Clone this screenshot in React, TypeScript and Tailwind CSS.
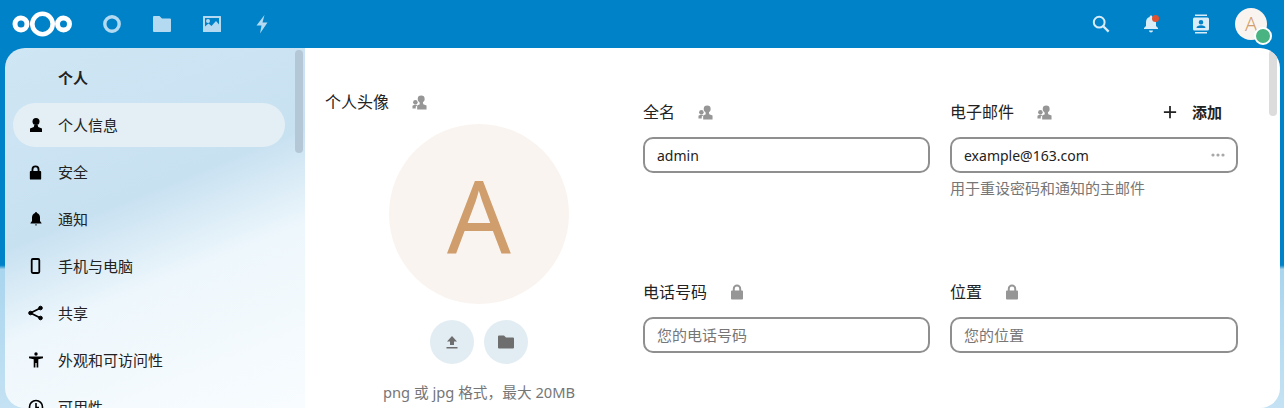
import React from "react";

const FONT = "font-['Noto_Sans','Noto_Sans_CJK_SC',sans-serif]";

function Contacts({ className = "" }: { className?: string }) {
  return (
    <svg viewBox="0 0 16 16" className={className} fill="currentColor">
      <circle cx="9.800" cy="4.200" r="3.700" />
      <path d="M8 7.500h3.600l.4 2.300 3.500 1.500V15.500H5.500v-4.200l2.800-1.500z" />
      <circle cx="3.600" cy="7.800" r="2.400" />
      <path d="M.5 14.500v-3l2-1.200h2.200l.8.900-1.500 1v2.300z" />
    </svg>
  );
}

function Lock({ className = "" }: { className?: string }) {
  return (
    <svg viewBox="0 0 24 24" className={className} fill="currentColor">
      <path d="M12 2a5.600 5.600 0 0 0-5.600 5.600V10H5.200A1.200 1.200 0 0 0 4 11.200v9.600A1.200 1.200 0 0 0 5.200 22h13.600a1.200 1.200 0 0 0 1.200-1.200v-9.600a1.200 1.200 0 0 0-1.200-1.200h-1.200V7.600A5.600 5.600 0 0 0 12 2zm0 2.600a3 3 0 0 1 3 3V10H9V7.600a3 3 0 0 1 3-3z" />
    </svg>
  );
}

function NavItem({ label, active, icon }: { label: string; active?: boolean; icon: React.ReactNode }) {
  return (
    <div className={`mb-[3px] ml-[8px] flex h-[44px] w-[272px] shrink-0 items-center rounded-[22px] ${active ? "bg-[#e3eff5]" : ""}`}>
      <div className="flex w-[45px] justify-center text-black">{icon}</div>
      <span className="text-[15px] text-[#222222]">{label}</span>
    </div>
  );
}

function Label({ text, icon, width }: { text: string; icon: React.ReactNode; width: string }) {
  return (
    <div className="flex h-[20px] items-center text-[16px] text-[#222222]">
      <span className={`${width} shrink-0`}>{text}</span>
      <span className="text-[#969696]">{icon}</span>
    </div>
  );
}

function Field({ value, placeholder, menu }: { value?: string; placeholder?: string; menu?: boolean }) {
  return (
    <div className="mt-[15px] flex h-[36px] w-full items-center justify-between rounded-[10px] border-2 border-[#8f8f8f] bg-white pl-[12px] pr-[11px]">
      {value ? (
        <span className="text-[14px] text-[#222222]">{value}</span>
      ) : (
        <span className="text-[15px] text-[#767676]">{placeholder}</span>
      )}
      {menu && (
        <svg viewBox="0 0 14 4" className="h-[4px] w-[14px]" fill="#a8a8a8">
          <circle cx="2" cy="2" r="1.600" />
          <circle cx="7" cy="2" r="1.600" />
          <circle cx="12" cy="2" r="1.600" />
        </svg>
      )}
    </div>
  );
}

export default function App() {
  return (
    <div className={`${FONT} relative h-[408px] w-[1284px] overflow-hidden bg-[linear-gradient(180deg,#0082c9_0%,#0082c9_65%,#a9d5ee_66%,#c4e2f3_100%)]`}>
      <header className="flex h-[48px] items-center bg-[#0082c9] pb-[1px]">
        <svg viewBox="0 0 62 30" className="ml-[11px] h-[30px] w-[62px] shrink-0" fill="none" stroke="#fff">
          <circle cx="31.500" cy="15" r="10.200" strokeWidth="4.600" />
          <circle cx="10" cy="15" r="6" strokeWidth="5" />
          <circle cx="52.500" cy="15" r="6" strokeWidth="5" />
        </svg>
        <nav className="ml-[14px] flex items-center text-[#b3daf0]">
          <div className="flex w-[50px] justify-center">
            <svg viewBox="0 0 20 20" className="h-[20px] w-[20px]" fill="none" stroke="currentColor" strokeWidth="3.400">
              <circle cx="10" cy="10" r="7.200" />
            </svg>
          </div>
          <div className="flex w-[50px] justify-center">
            <svg viewBox="0 0 20 20" className="h-[20px] w-[20px]" fill="currentColor">
              <path d="M1 3a1 1 0 0 1 1-1h5.500L10 4.500h8a1 1 0 0 1 1 1V17a1 1 0 0 1-1 1H2a1 1 0 0 1-1-1z" />
            </svg>
          </div>
          <div className="flex w-[50px] justify-center">
            <svg viewBox="0 0 20 20" className="h-[20px] w-[20px]" fill="currentColor">
              <path fillRule="evenodd" d="M1.500 2h17a.5.5 0 0 1 .5.5v15a.5.5 0 0 1-.5.5h-17a.5.5 0 0 1-.5-.5v-15a.5.5 0 0 1 .5-.5zM3 4v8.500l3.500-3 3 2.500L14 7l3 3.500V4zM6 5a2 2 0 1 1 0 4 2 2 0 0 1 0-4z" />
            </svg>
          </div>
          <div className="flex w-[50px] justify-center">
            <svg viewBox="0 0 20 20" className="h-[20px] w-[20px]" fill="currentColor">
              <path d="M12.500 1 4.500 11.500h5L8 19.500l7.500-11h-5z" />
            </svg>
          </div>
        </nav>
        <div className="ml-auto flex items-center">
          <div className="flex w-[50px] justify-center text-[#d8edf8]">
            <svg viewBox="0 0 20 20" className="h-[18px] w-[18px]" fill="none" stroke="currentColor" strokeWidth="2.200">
              <circle cx="8" cy="8" r="6" />
              <path d="m12.500 12.500 6 6" strokeWidth="2.600" />
            </svg>
          </div>
          <div className="relative flex w-[50px] justify-center text-[#d8edf8]">
            <svg viewBox="0 0 20 20" className="h-[20px] w-[20px]" fill="currentColor">
              <path d="M10 1.500a1.400 1.400 0 0 1 1.400 1.400c2.700.7 3.600 3 3.600 5.600v3.500l2 2v1H3v-1l2-2V8.500c0-2.600 1-4.900 3.600-5.600A1.400 1.400 0 0 1 10 1.500zM8 16.500h4a2 2 0 0 1-4 0z" />
            </svg>
            <span className="absolute right-[17px] top-[1px] h-[7px] w-[7px] rounded-full bg-[#e0522e]" />
          </div>
          <div className="flex w-[50px] justify-center text-[#d8edf8]">
            <svg viewBox="0 0 20 20" className="h-[20px] w-[20px]" fill="currentColor">
              <path fillRule="evenodd" d="M4 0.500h12v1.600H4zM4 17.900h12v1.600H4zM3.500 3.500h13a1.500 1.500 0 0 1 1.500 1.500v10a1.500 1.500 0 0 1-1.500 1.500h-13A1.500 1.500 0 0 1 2 15V5a1.500 1.500 0 0 1 1.500-1.500zM10 6a2.300 2.300 0 1 0 0 4.600A2.300 2.300 0 0 0 10 6zM5.500 14h9c0-1.800-2-2.700-4.500-2.700S5.500 12.200 5.500 14z" />
            </svg>
          </div>
          <div className="relative ml-[9px] mr-[17px] flex h-[32px] w-[32px] items-center justify-center rounded-full bg-[#faf4f0] text-[20px] font-light text-[#cf9e6c]">
            A
            <span className="absolute bottom-[-5px] right-[-5px] h-[18px] w-[18px] rounded-full border-2 border-white bg-[#49b382]" />
          </div>
        </div>
      </header>

      <main className="ml-[5px] mr-[4px] flex h-[360px] overflow-hidden rounded-[20px]">
        <aside className="relative flex w-[300px] shrink-0 flex-col overflow-hidden bg-[linear-gradient(158deg,#cfe6f4_0%,#c8e1f1_42%,#eef7fc_62%,#f8fcff_100%)]">
          <div className="flex h-[55px] shrink-0 items-center pl-[53px] pt-[5px] text-[15px] font-bold text-[#222222]">个人</div>
          <NavItem
            active
            label="个人信息"
            icon={
              <svg viewBox="0 0 16 16" className="h-[16px] w-[16px]" fill="currentColor">
                <circle cx="8" cy="4.500" r="3.500" />
                <path d="M6.300 8h3.400l.5 2 3.800 1.500V15H2V11.500L5.800 10z" />
              </svg>
            }
          />
          <NavItem label="安全" icon={<Lock className="h-[17px] w-[17px]" />} />
          <NavItem
            label="通知"
            icon={
              <svg viewBox="0 0 16 16" className="h-[16px] w-[16px]" fill="currentColor">
                <path d="M8 1a1 1 0 0 1 1 1c2 .6 3 2.400 3 4.500V10l1.500 2v.5h-11V12L4 10V6.500C4 4.400 5 2.600 7 2a1 1 0 0 1 1-1zM7 13.500h2a1 1 0 0 1-2 0z" />
              </svg>
            }
          />
          <NavItem
            label="手机与电脑"
            icon={
              <svg viewBox="0 0 16 16" className="h-[16px] w-[16px]" fill="none" stroke="currentColor" strokeWidth="1.800">
                <rect x="3.700" y="1" width="7.600" height="14" rx="1.200" />
              </svg>
            }
          />
          <NavItem
            label="共享"
            icon={
              <svg viewBox="0 0 16 16" className="h-[16px] w-[16px]" fill="currentColor" stroke="currentColor">
                <circle cx="12.500" cy="3" r="1.800" />
                <circle cx="12.500" cy="13" r="1.800" />
                <circle cx="2.500" cy="8" r="1.800" />
                <path d="M2.500 8 12.500 3M2.500 8l10 5" strokeWidth="1.800" />
              </svg>
            }
          />
          <NavItem
            label="外观和可访问性"
            icon={
              <svg viewBox="0 0 16 16" className="h-[16px] w-[16px]" fill="currentColor">
                <circle cx="8" cy="2" r="1.700" />
                <path d="M1 4.500h14v1.800L10.300 7.300v8.200H8.600V11h-1.200v4.500H5.700V7.300L1 6.300z" />
              </svg>
            }
          />
          <NavItem
            label="可用性"
            icon={
              <svg viewBox="0 0 16 16" className="h-[16px] w-[16px]" fill="none" stroke="currentColor" strokeWidth="1.600">
                <circle cx="8" cy="8" r="6.500" />
                <path d="M8 4v4.500h3" />
              </svg>
            }
          />
          <div className="absolute right-[2px] top-[2px] h-[103px] w-[8px] rounded-[4px] bg-[#b4c7d6]" />
        </aside>

        <section className="relative flex min-w-0 flex-1 bg-white">
          <div className="flex w-[338px] shrink-0 flex-col pt-[44px]">
            <div className="ml-[20px]">
              <Label text="个人头像" width="w-[87px]" icon={<Contacts className="block h-[15px] w-[15px]" />} />
            </div>
            <div className="ml-[84px] mt-[12px] flex h-[180px] w-[180px] items-center justify-center rounded-full bg-[#faf4f0] text-[100px] leading-none text-[#cf9e6c]">
              A
            </div>
            <div className="ml-[125px] mt-[16px] flex gap-[10px]">
              <div className="flex h-[44px] w-[44px] items-center justify-center rounded-full bg-[#e2edf3] text-[#6e6e6e]">
                <svg viewBox="0 0 16 16" className="h-[16px] w-[16px]" fill="currentColor">
                  <path d="M8 2 13 7.500H10V11H6V7.500H3zM2.500 13h11v1.500h-11z" />
                </svg>
              </div>
              <div className="flex h-[44px] w-[44px] items-center justify-center rounded-full bg-[#e2edf3] text-[#6e6e6e]">
                <svg viewBox="0 0 18 18" className="h-[18px] w-[18px]" fill="currentColor">
                  <path d="M1 3.500A1 1 0 0 1 2 2.500h5L9 4.500h7a1 1 0 0 1 1 1v9a1 1 0 0 1-1 1H2a1 1 0 0 1-1-1z" />
                </svg>
              </div>
            </div>
            <div className="ml-[78px] mt-[18px] whitespace-nowrap text-[14.7px] leading-[20px] text-[#767676]">png 或 jpg 格式，最大 20MB</div>
          </div>

          <div className="grid flex-1 grid-cols-[287px_288px] content-start gap-x-[20px] pt-[54px]">
            <div className="h-[180px]">
              <Label text="全名" width="w-[55px]" icon={<Contacts className="block h-[15px] w-[15px]" />} />
              <Field value="admin" />
            </div>
            <div className="h-[180px]">
              <div className="flex items-center justify-between">
                <Label text="电子邮件" width="w-[87px]" icon={<Contacts className="block h-[15px] w-[15px]" />} />
                <div className="mr-[16px] flex h-[20px] items-center text-[15px] font-bold text-[#222222]">
                  <svg viewBox="0 0 16 16" className="mr-[15px] h-[14px] w-[14px]" fill="currentColor">
                    <path d="M7 1h2v6h6v2H9v6H7V9H1V7h6z" />
                  </svg>
                  添加
                </div>
              </div>
              <Field value="example@163.com" menu />
              <div className="mt-[5px] text-[15px] leading-[20px] text-[#767676]">用于重设密码和通知的主邮件</div>
            </div>
            <div>
              <Label text="电话号码" width="w-[85px]" icon={<Lock className="block h-[18px] w-[18px]" />} />
              <Field placeholder="您的电话号码" />
            </div>
            <div>
              <Label text="位置" width="w-[53px]" icon={<Lock className="block h-[18px] w-[18px]" />} />
              <Field placeholder="您的位置" />
            </div>
          </div>

          <div className="absolute right-[3px] top-[2px] h-[66px] w-[8px] rounded-[4px] bg-[#dcdcdc]" />
        </section>
      </main>
    </div>
  );
}
